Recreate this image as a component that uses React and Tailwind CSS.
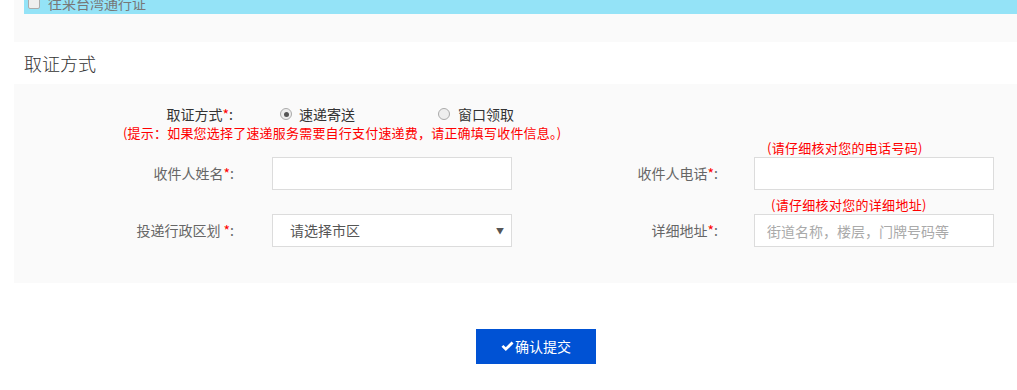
import React, { useState } from 'react';

const font = { fontFamily: '"Noto Sans CJK SC", "Liberation Sans", sans-serif' };

const Label = ({ children, className = '' }) => (
    <div className={`text-right text-[14px] text-[#666] ${className}`}>
        {children}
        <span className="text-[#f00]">*</span>:
    </div>
);

const App = () => {
    const [method, setMethod] = useState('express');

    return (
        <div className="w-[1017px] h-[390px] bg-white overflow-hidden" style={font}>
            {/* previous section tail */}
            <div className="ml-[14px] h-[42px] bg-[#fafafa] pl-[10px]">
                <div className="h-[14px] bg-[#94e3f7] overflow-hidden flex items-end">
                    <div className="flex items-center gap-[8px] pl-[4px] pb-[1px] text-[14px] leading-[20px] text-[#777]">
                        <span className="w-[12px] h-[12px] rounded-[2px] border border-[#aaa] bg-[#eee]" />
                        往来台湾通行证
                    </div>
                </div>
            </div>

            {/* section title */}
            <div className="h-[42px] flex items-center pl-[24px] text-[18px] font-light text-[#333]">取证方式</div>

            {/* form panel */}
            <div className="ml-[14px] h-[199px] bg-[#fafafa] pt-[20px]">
                <div className="flex items-center h-[20px]">
                    <div className="w-[219px] text-right text-[14px] text-[#333]">
                        取证方式<span className="text-[#f00]">*</span>:
                    </div>
                    <label className="ml-[47px] flex items-center gap-[7px] text-[14px] text-[#333] cursor-pointer" onClick={() => setMethod('express')}>
                        <span className="w-[12px] h-[12px] rounded-full border border-[#aaa] bg-[#eee] flex items-center justify-center">
                            {method === 'express' && <span className="w-[5px] h-[5px] rounded-full bg-[#555]" />}
                        </span>
                        速递寄送
                    </label>
                    <label className="ml-[83px] flex items-center gap-[8px] text-[14px] text-[#333] cursor-pointer" onClick={() => setMethod('window')}>
                        <span className="w-[12px] h-[12px] rounded-full border border-[#aaa] bg-[#eee] flex items-center justify-center">
                            {method === 'window' && <span className="w-[5px] h-[5px] rounded-full bg-[#555]" />}
                        </span>
                        窗口领取
                    </label>
                </div>
                <div className="pl-[109px] text-[13px] leading-[16px] tracking-[0.2px] text-[#f00] mt-[1px]">
                    (提示：如果您选择了速递服务需要自行支付速递费，请正确填写收件信息。)
                </div>

                {/* row 1 */}
                <div className="flex items-end mt-[16px]">
                    <div className="flex items-center h-[33px]">
                        <Label className="w-[220px]">收件人姓名</Label>
                        <input className="ml-[38px] w-[240px] h-[33px] bg-white border border-[#dcdcdc] outline-none px-[16px] text-[14px]" />
                    </div>
                    <div className="flex items-center h-[33px]">
                        <Label className="w-[206px]">收件人电话</Label>
                        <div className="ml-[36px] relative">
                            <span className="absolute left-[13px] -top-[17px] text-[13px] leading-[16px] tracking-[0.3px] text-[#f00] whitespace-nowrap">(请仔细核对您的电话号码)</span>
                            <input className="w-[240px] h-[33px] bg-white border border-[#dcdcdc] outline-none px-[12px] text-[14px]" />
                        </div>
                    </div>
                </div>

                {/* row 2 */}
                <div className="flex items-end mt-[24px]">
                    <div className="flex items-center h-[33px]">
                        <Label className="w-[220px]">投递行政区划 </Label>
                        <div className="ml-[38px] w-[240px] h-[33px] bg-white border border-[#dcdcdc] flex items-center justify-between pl-[17px] pr-[7px] text-[14px] text-[#555]">
                            请选择市区
                            <span className="text-[8px] text-[#555]">▼</span>
                        </div>
                    </div>
                    <div className="flex items-center h-[33px]">
                        <Label className="w-[206px]">详细地址</Label>
                        <div className="ml-[36px] relative">
                            <span className="absolute left-[17px] -top-[17px] text-[13px] leading-[16px] tracking-[0.3px] text-[#f00] whitespace-nowrap">(请仔细核对您的详细地址)</span>
                            <input placeholder="街道名称，楼层，门牌号码等" className="w-[240px] h-[33px] bg-white border border-[#dcdcdc] outline-none px-[12px] text-[14px] placeholder:text-[#aaa]" />
                        </div>
                    </div>
                </div>
            </div>

            <div className="pt-[46px] pl-[476px]">
                <button className="w-[120px] h-[35px] bg-[#0052d4] text-white text-[14px] flex items-center justify-center gap-[1px]">
                    <svg width="13" height="11" viewBox="0 0 13 11" fill="white"><path d="M0.5 5.8 L2.4 3.9 L4.8 6.3 L10.6 0.5 L12.5 2.4 L4.8 10.1 Z" /></svg>
                    确认提交
                </button>
            </div>
        </div>
    );
};

export default App;
